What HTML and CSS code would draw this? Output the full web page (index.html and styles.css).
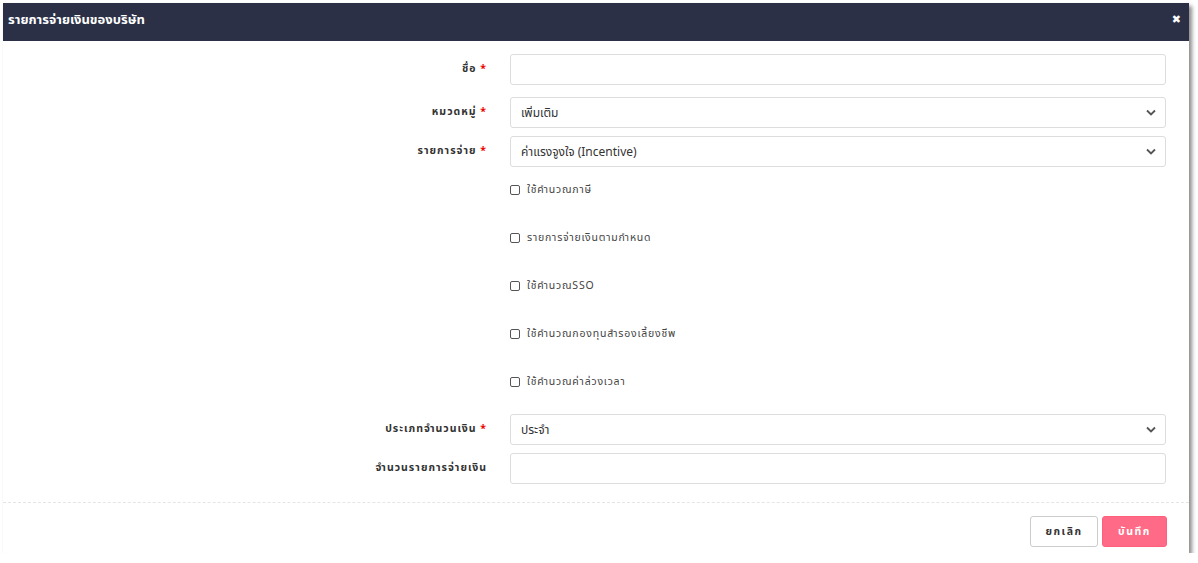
FILE: index.html
```html
<!DOCTYPE html>
<html lang="th">
<head>
<meta charset="utf-8">
<title>รายการจ่ายเงินของบริษัท</title>
<link rel="stylesheet" href="styles.css">
</head>
<body>
<div class="modal">
  <div class="modal-header">
    <h4 class="modal-title">รายการจ่ายเงินของบริษัท</h4>
    <span class="close">&#10006;</span>
  </div>
  <div class="modal-body">
    <div class="row r-gap12">
      <label class="lbl">ชื่อ <span class="req">*</span></label>
      <div class="ctl"><input class="input" type="text"></div>
    </div>
    <div class="row r-gap8">
      <label class="lbl">หมวดหมู่ <span class="req">*</span></label>
      <div class="ctl"><div class="select"><span>เพิ่มเติม</span><svg class="chev" viewBox="0 0 10 6"><path d="M1 1l4 4 4-4" fill="none" stroke="#555" stroke-width="1.8"/></svg></div></div>
    </div>
    <div class="row">
      <label class="lbl">รายการจ่าย <span class="req">*</span></label>
      <div class="ctl"><div class="select"><span>ค่าแรงจูงใจ (Incentive)</span><svg class="chev" viewBox="0 0 10 6"><path d="M1 1l4 4 4-4" fill="none" stroke="#555" stroke-width="1.8"/></svg></div></div>
    </div>
    <div class="row checks-row">
      <div class="lbl"></div>
      <div class="checks">
        <label class="chk"><span class="box"></span>ใช้คำนวณภาษี</label>
        <label class="chk"><span class="box"></span>รายการจ่ายเงินตามกำหนด</label>
        <label class="chk"><span class="box"></span>ใช้คำนวณSSO</label>
        <label class="chk"><span class="box"></span>ใช้คำนวณกองทุนสำรองเลี้ยงชีพ</label>
        <label class="chk"><span class="box"></span>ใช้คำนวณค่าล่วงเวลา</label>
      </div>
    </div>
    <div class="row r-gap8">
      <label class="lbl">ประเภทจำนวนเงิน <span class="req">*</span></label>
      <div class="ctl"><div class="select"><span>ประจำ</span><svg class="chev" viewBox="0 0 10 6"><path d="M1 1l4 4 4-4" fill="none" stroke="#555" stroke-width="1.8"/></svg></div></div>
    </div>
    <div class="row">
      <label class="lbl">จำนวนรายการจ่ายเงิน</label>
      <div class="ctl"><input class="input" type="text"></div>
    </div>
  </div>
  <div class="modal-footer">
    <button class="btn btn-cancel">ยกเลิก</button>
    <button class="btn btn-save">บันทึก</button>
  </div>
</div>
</body>
</html>
```
FILE: styles.css
```css
* { box-sizing: border-box; }
html, body { margin: 0; padding: 0; background: #fff; }
body {
  font-family: Tahoma, "Noto Sans Thai", "Loma", "Garuda", "Noto Sans", "DejaVu Sans", sans-serif;
  color: #333;
  padding: 3px 0 0 3px;
}
.modal {
  width: 1186px;
  height: 550px;
  background: #fff;
  box-shadow: 3px 3px 4px rgba(0, 0, 0, 0.45);
  display: flex;
  flex-direction: column;
}
.modal-header {
  height: 38px;
  background: #2b3046;
  display: flex;
  align-items: center;
  justify-content: space-between;
  padding: 0 8px 4px 5px;
}
.modal-title {
  margin: 0;
  color: #fff;
  font-size: 13px;
  font-weight: bold;
}
.close {
  color: #fff;
  font-size: 11px;
  font-weight: bold;
  margin-top: -2px;
}
.modal-body {
  padding-top: 13px;
  flex: 1;
}
.row {
  display: grid;
  grid-template-columns: 484px 656px;
  column-gap: 23px;
}
.r-gap12 { margin-bottom: 12px; }
.r-gap8 { margin-bottom: 8px; }
.lbl {
  text-align: right;
  font-size: 10.5px;
  font-weight: bold;
  color: #333;
  letter-spacing: 1px;
  padding-top: 7px;
}
.req { color: #e00; }
.input, .select {
  width: 656px;
  height: 31px;
  border: 1px solid #ddd;
  border-radius: 3px;
  background: #fff;
  font: inherit;
  font-size: 12px;
  color: #333;
  display: flex;
  align-items: center;
  padding: 0 10px;
}
.select { justify-content: space-between; }
.chev { width: 10px; height: 7px; margin-right: -1px; }
.checks-row { margin: 12px 0 23px; }
.checks {
  display: flex;
  flex-direction: column;
  gap: 28px;
}
.chk {
  height: 20px;
  display: flex;
  align-items: center;
  font-size: 10.5px;
  color: #444;
  letter-spacing: 0.8px;
  padding-top: 1px;
}
.box {
  width: 10px;
  height: 10px;
  border: 1px solid #555;
  border-radius: 2px;
  margin-right: 7px;
}
.modal-footer {
  border-top: 1px dashed #e5e5e5;
  height: 51px;
  display: flex;
  justify-content: flex-end;
  align-items: flex-start;
  padding: 13px 22px 0 0;
  gap: 4px;
}
.btn {
  height: 31px;
  border-radius: 3px;
  font: inherit;
  font-size: 10.5px;
  font-weight: bold;
  letter-spacing: 1.5px;
  cursor: pointer;
}
.btn-cancel {
  width: 68px;
  background: #fff;
  border: 1px solid #ccc;
  color: #333;
}
.btn-save {
  width: 65px;
  background: #ff6b86;
  border: 1px solid #ff5f7d;
  color: #fff;
}
```
